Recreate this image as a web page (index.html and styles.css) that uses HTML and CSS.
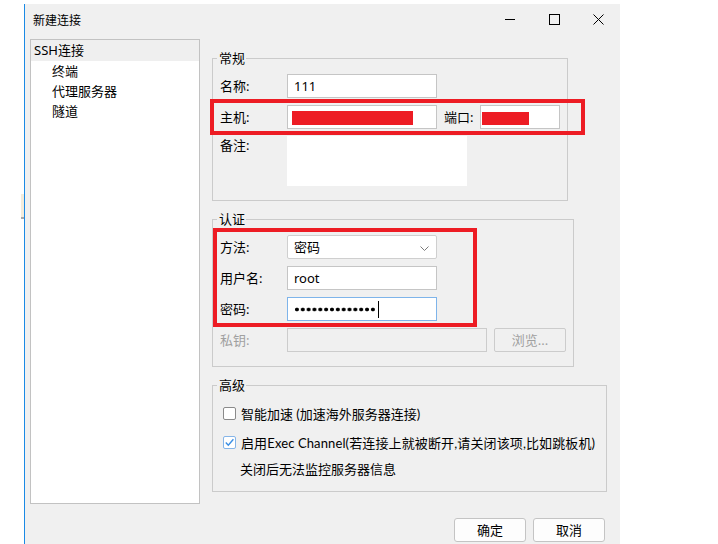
FILE: index.html
```html
<!DOCTYPE html>
<html lang="zh-CN">
<head>
<meta charset="utf-8">
<title>新建连接</title>
<link rel="stylesheet" href="styles.css">
</head>
<body>
<div class="edge"><div class="scrap"></div></div>
<div class="window">
  <div class="titlebar">
    <div class="title">新建连接</div>
    <div class="controls">
      <div class="ctl"><svg width="10" height="10" viewBox="0 0 10 10"><line x1="0" y1="4.5" x2="10" y2="4.5" stroke="#000" stroke-width="1"/></svg></div>
      <div class="ctl"><svg width="11" height="11" viewBox="0 0 11 11"><rect x="0.5" y="0.5" width="10" height="10" fill="none" stroke="#000" stroke-width="1"/></svg></div>
      <div class="ctl"><svg width="11" height="11" viewBox="0 0 11 11"><path d="M0.5 0.5 L10.5 10.5 M10.5 0.5 L0.5 10.5" stroke="#000" stroke-width="1"/></svg></div>
    </div>
  </div>
  <div class="main">
    <div class="tree">
      <div class="node sel">SSH连接</div>
      <div class="node child">终端</div>
      <div class="node child">代理服务器</div>
      <div class="node child">隧道</div>
    </div>
    <div class="panel">
      <fieldset class="group g1">
        <legend>常规</legend>
        <div class="row">
          <span class="lbl">名称:</span>
          <div class="field w150">111</div>
        </div>
        <div class="row">
          <span class="lbl">主机:</span>
          <div class="field w150 hostf"><span class="redact host"></span></div>
          <span class="port-lbl">端口:</span>
          <div class="field w80 portf"><span class="redact port"></span></div>
        </div>
        <div class="row top">
          <span class="lbl memo-lbl">备注:</span>
          <div class="memo"></div>
        </div>
      </fieldset>

      <fieldset class="group g2">
        <legend>认证</legend>
        <div class="row">
          <span class="lbl">方法:</span>
          <div class="field w150 select"><span>密码</span>
            <svg class="chev" width="9" height="5" viewBox="0 0 9 5"><path d="M0.5 0.5 L4.5 4.5 L8.5 0.5" fill="none" stroke="#7a7a7a" stroke-width="1"/></svg>
          </div>
        </div>
        <div class="row">
          <span class="lbl">用户名:</span>
          <div class="field w150">root</div>
        </div>
        <div class="row">
          <span class="lbl">密码:</span>
          <div class="field w150 focus"><span class="dots"></span><span class="caret"></span></div>
        </div>
        <div class="row">
          <span class="lbl dim">私钥:</span>
          <div class="field w200 disabled"></div>
          <div class="browse">浏览...</div>
        </div>
      </fieldset>

      <fieldset class="group g3">
        <legend>高级</legend>
        <div class="check-row">
          <span class="cb"></span>
          <span>智能加速 (加速海外服务器连接)</span>
        </div>
        <div class="check-row second">
          <span class="cb on"><svg width="11" height="11" viewBox="0 0 11 11"><path d="M1.8 5.6 L4.3 8.3 L9.4 2.2" fill="none" stroke="#3b8fe4" stroke-width="1.4"/></svg></span>
          <span class="wide">启用<span class="lat">Exec Channel(</span>若连接上就被断开<span class="lat">,</span>请关闭该项<span class="lat">,</span>比如跳板机<span class="lat">)</span></span>
        </div>
        <div class="note">关闭后无法监控服务器信息</div>
      </fieldset>

      <div class="buttons">
        <div class="btn">确定</div>
        <div class="btn">取消</div>
      </div>
    </div>
  </div>
  <div class="mark mark1"></div>
  <div class="mark mark2"></div>
</div>
</body>
</html>
```

FILE: styles.css
```css
body {
  margin: 0;
  background: #ffffff;
  display: flex;
  align-items: flex-start;
  font-family: "Noto Sans", "Noto Sans CJK SC", sans-serif;
  font-size: 13px;
  color: #000000;
}

.edge {
  width: 24px;
  flex: none;
}

.scrap {
  margin: 194px 0 0 21px;
  width: 3px;
  height: 23px;
  background: #f4ecdb;
  border-bottom: 2px solid #a8a8a8;
}

.window {
  position: relative;
  flex: none;
  width: 596px;
  height: 540px;
  margin-top: 4px;
  box-sizing: border-box;
  border-left: 1px solid #1a8ae5;
  background: #f0f0f0;
  overflow: hidden;
}

.titlebar {
  display: flex;
  align-items: center;
  height: 31px;
}

.title {
  flex: 1;
  padding-left: 8px;
  font-family: "Noto Sans CJK SC", sans-serif;
  font-size: 12px;
  line-height: 16px;
}

.controls {
  display: flex;
  align-self: stretch;
}

.ctl {
  width: 44px;
  display: flex;
  align-items: center;
  justify-content: center;
}

.ctl svg {
  display: block;
}

.main {
  display: flex;
  align-items: flex-start;
  padding: 4px 0 0 5px;
}

.tree {
  flex: none;
  width: 170px;
  height: 465px;
  box-sizing: border-box;
  border: 1px solid #c2c2c2;
  background: #ffffff;
  margin-right: 12px;
}

.node {
  height: 20px;
  line-height: 20px;
  white-space: nowrap;
}

.node.sel {
  height: 21px;
  line-height: 21px;
  padding-left: 3px;
  background: #efefef;
}

.node.child {
  padding-left: 21px;
}

.panel {
  padding-top: 11px;
}

.group {
  margin: 0;
  padding: 8px 0 14px;
  border: 1px solid #cbcbcb;
  box-sizing: border-box;
  min-inline-size: 0;
}

.group legend {
  margin-left: 4px;
  padding: 0 1px 0 2px;
  line-height: 16px;
  font-size: 13px;
}

.g1 {
  width: 356px;
}

.g2 {
  width: 362px;
  margin-top: 10px;
}

.g3 {
  width: 395px;
  margin-top: 10px;
  padding: 10px 0 12px;
}

.row {
  display: flex;
  align-items: center;
}

.row + .row {
  margin-top: 7px;
}

.row.top {
  align-items: flex-start;
}

.lbl {
  flex: none;
  width: 74px;
  padding-left: 7px;
  box-sizing: border-box;
  line-height: 16px;
  white-space: nowrap;
}

.memo-lbl {
  padding-top: 1px;
}

.dim {
  color: #a0a0a0;
}

.field {
  flex: none;
  height: 24px;
  box-sizing: border-box;
  border: 1px solid #c5c5c5;
  background: #ffffff;
  display: flex;
  align-items: center;
  padding-left: 6px;
  line-height: 16px;
}

.w150 {
  width: 150px;
}

.w200 {
  width: 200px;
}

.w80 {
  width: 80px;
}

.hostf {
  padding-left: 4px;
}

.portf {
  padding-left: 1px;
}

.port-lbl {
  flex: none;
  width: 36px;
  margin-left: 7px;
  line-height: 16px;
}

.redact {
  display: block;
  background: #ed1c24;
  margin-top: 2px;
}

.redact.host {
  width: 121px;
  height: 14px;
}

.redact.port {
  width: 47px;
  height: 13px;
}

.memo {
  width: 180px;
  height: 50px;
  background: #ffffff;
}

.select {
  justify-content: space-between;
  padding-right: 7px;
  border-color: #cfcfcf;
  border-radius: 2px;
}

.chev {
  display: block;
  margin-top: 2px;
}

.focus {
  border-color: #7eb4ea;
}

.dots {
  display: block;
  width: 82px;
  height: 5px;
  background-image: radial-gradient(circle, #000000 1.6px, rgba(0, 0, 0, 0) 2.2px);
  background-size: 5.857px 5px;
  background-repeat: repeat-x;
}

.caret {
  display: block;
  width: 1px;
  height: 17px;
  margin-left: 2px;
  background: #000000;
}

.disabled {
  background: #f0f0f0;
  border-color: #cccccc;
}

.browse {
  flex: none;
  width: 72px;
  height: 24px;
  margin-left: 7px;
  box-sizing: border-box;
  border: 1px solid #cccccc;
  border-radius: 2px;
  background: #f0f0f0;
  color: #a0a0a0;
  display: flex;
  align-items: center;
  justify-content: center;
  line-height: 16px;
}

.check-row {
  display: flex;
  align-items: center;
  height: 20px;
  white-space: nowrap;
  font-family: Lato, "Noto Sans CJK SC", sans-serif;
}

.check-row.second {
  margin-top: 9px;
}

.wide {
  letter-spacing: 0.12px;
}

.lat {
  font-family: Lato, sans-serif;
}

.cb {
  flex: none;
  width: 13px;
  height: 13px;
  box-sizing: border-box;
  border: 1px solid #8a8a8a;
  border-radius: 2px;
  background: #ffffff;
  margin: 0 5px 0 10px;
}

.cb svg {
  display: block;
}

.cb.on {
  border-color: #86b5e8;
}

.note {
  height: 20px;
  line-height: 20px;
  margin-top: 7px;
  padding-left: 27px;
  white-space: nowrap;
}

.buttons {
  display: flex;
  justify-content: flex-end;
  gap: 7px;
  width: 393px;
  margin-top: 26px;
}

.btn {
  width: 72px;
  height: 24px;
  box-sizing: border-box;
  border: 1px solid #c4c4c4;
  border-radius: 3px;
  background: #fdfdfd;
  display: flex;
  align-items: center;
  justify-content: center;
  line-height: 16px;
}

.mark {
  position: absolute;
  box-sizing: border-box;
  border: 4px solid #ed1c24;
}

.mark1 {
  left: 185px;
  top: 95px;
  width: 375px;
  height: 36px;
}

.mark2 {
  left: 188px;
  top: 224px;
  width: 264px;
  height: 99px;
}
```
